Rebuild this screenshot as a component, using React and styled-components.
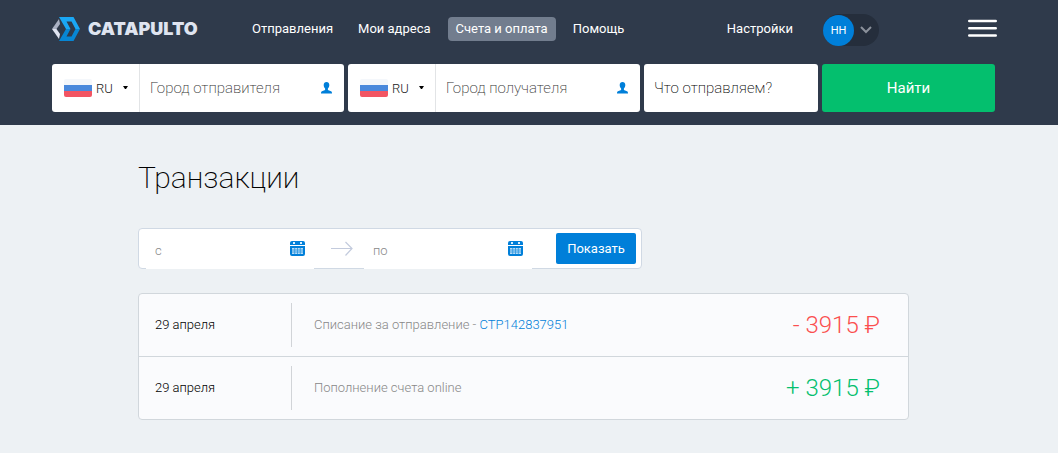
import React from "react";
import styled, { createGlobalStyle } from "styled-components";

const GlobalStyle = createGlobalStyle`
  *, *::before, *::after { box-sizing: border-box; }
  body {
    margin: 0;
    background: #edf1f4;
    color: #111;
    font-family: Roboto, "Liberation Sans", sans-serif;
    font-size: 13px;
    line-height: 20px;
  }
  button, input, select { font-family: inherit; }
`;

const Header = styled.header`
  padding: 14px 63px 13px 52px;
  background: #2f3a4b;
`;

const TopBar = styled.div`
  display: flex;
  align-items: center;
  height: 32px;
  margin-bottom: 18px;
`;

const Logo = styled.a`
  display: flex;
  align-items: center;
  gap: 8px;
  width: 192px;
  padding-bottom: 2px;
  color: #dfe4f0;
  font-family: Inter, Roboto, sans-serif;
  font-size: 18px;
  font-weight: 900;
  text-decoration: none;
`;

const Nav = styled.nav`
  display: flex;
  flex: 1;
  gap: 9px;
  margin-bottom: 2px;
`;

const NavLink = styled.a`
  padding: 2px 8px;
  border-radius: 4px;
  background: ${(p) => (p.$active ? "#727d8e" : "transparent")};
  color: #fff;
  font-weight: 400;
  text-decoration: none;
  white-space: nowrap;
`;

const SettingsLink = styled(NavLink)`
  margin: 0 22px 2px 0;
`;

const UserButton = styled.button`
  display: flex;
  align-items: center;
  gap: 6px;
  width: 56px;
  height: 32px;
  margin-right: 87px;
  padding: 0;
  border: 0;
  border-radius: 16px;
  background: #252e3c;
`;

const Avatar = styled.span`
  width: 31px;
  border-radius: 50%;
  background: #007fd9;
  color: #fff;
  font-size: 11px;
  line-height: 31px;
  text-align: center;
`;

const MenuButton = styled.button`
  display: flex;
  margin: 0 -2px 4px 0;
  padding: 0;
  border: 0;
  background: none;
`;

const SearchForm = styled.form`
  display: grid;
  grid-template-columns: 292fr 292fr 174fr 173fr;
  gap: 4px;
  height: 48px;
`;

const CityBox = styled.div`
  display: flex;
  align-items: center;
  min-width: 0;
  padding-right: 12px;
  border-radius: 3px;
  background: #fff;
`;

const Country = styled.label`
  display: flex;
  flex: none;
  align-items: center;
  gap: 4px;
  width: 88px;
  height: 100%;
  padding: 0 11px 0 12px;
  border-right: 1px solid #e2e4e6;
`;

const CountrySelect = styled.select`
  flex: 1;
  min-width: 0;
  padding: 0;
  border: 0;
  appearance: none;
  background: none;
  color: #222;
  font-size: 13px;
  font-weight: 300;
`;

const SearchInput = styled.input`
  flex: 1;
  min-width: 0;
  padding: 0 10px;
  border: 0;
  border-radius: 3px;
  background: #fff;
  font-size: 15px;
  font-weight: 200;
  &::placeholder { color: ${(p) => (p.$dark ? "#000" : "#333")}; opacity: 1; }
`;

const SearchButton = styled.button`
  border: 0;
  border-radius: 3px;
  background: #04bf6e;
  color: #fff;
  font-size: 15px;
`;

const Main = styled.main`
  padding: 35px 149px 33px 138px;
`;

const Title = styled.h1`
  margin: 0 0 32px;
  color: #000;
  font-size: 30px;
  font-weight: 200;
  line-height: 36px;
`;

const FilterForm = styled.form`
  display: flex;
  align-items: center;
  width: fit-content;
  height: 41px;
  margin-bottom: 24px;
  padding: 0 5px 0 7px;
  border: 1px solid #d0d9e4;
  border-radius: 4px;
  background: #fff;
`;

const DateField = styled.label`
  display: flex;
  align-items: center;
  width: 168px;
  height: 40px;
  margin-bottom: -1px;
  padding: 0 9px;
  background: #fff;
`;

const DateInput = styled.input`
  flex: 1;
  min-width: 0;
  padding: 2px 0 0;
  border: 0;
  background: none;
  font-size: 13px;
  font-weight: 300;
  &::placeholder { color: #888; opacity: 1; }
`;

const ArrowGap = styled.span`
  display: flex;
  justify-content: center;
  width: 50px;
  padding-left: 6px;
`;

const ShowButton = styled.button`
  width: 80px;
  height: 31px;
  margin-left: 24px;
  padding: 0;
  border: 0;
  border-radius: 2px;
  background: #007fd9;
  color: #fff;
  font-size: 13px;
`;

const Card = styled.div`
  border: 1px solid #d1d7dc;
  border-radius: 4px;
  background: #fafbfd;
`;

const Table = styled.table`
  width: 100%;
  border-collapse: collapse;
`;

const Row = styled.tr`
  & + & { border-top: 1px solid #d1d7dc; }
`;

const DateCell = styled.td`
  width: 152px;
  padding: 0 0 0 16px;
  color: #000;
  font-weight: 300;
`;

const TextCell = styled.td`
  padding: 9px 0;
`;

const Description = styled.div`
  padding-left: 22px;
  border-left: 1px solid #d1d4d8;
  color: #888;
  font-weight: 300;
  line-height: 44px;
`;

const OrderLink = styled.a`
  color: #007fd9;
  text-decoration: none;
`;

const AmountCell = styled.td`
  padding: 0 28px 0 0;
  color: ${(p) => (p.$income ? "#04bf6e" : "#fb4f4f")};
  font-size: 24px;
  font-weight: 300;
  text-align: right;
  white-space: nowrap;
`;

const LogoMark = () => (
  <svg width="28" height="24" viewBox="0 0 28 24" aria-hidden="true">
    <path d="M7 2 0 12h4.500L8 7z" fill="#aab1c3" />
    <path d="M0 12h4.500L8 17l-1 5z" fill="#e0e4f1" />
    <path d="M7 0h14.500L28 12h-4.500l-4-7.500H14.500L18.500 12H14z" fill="#1aa7f5" />
    <path d="M14 12h4.500l-4 7.500h5l4-7.500H28l-6.500 12H7z" fill="#0786d4" />
  </svg>
);

const Flag = () => (
  <svg width="28" height="18" viewBox="0 0 28 18" aria-hidden="true">
    <path d="M2 0h24a2 2 0 0 1 2 2v4H0V2a2 2 0 0 1 2-2z" fill="#f4f7fb" />
    <path d="M0 6h28v6H0z" fill="#4a89dc" />
    <path d="M0 12h28v4a2 2 0 0 1-2 2H2a2 2 0 0 1-2-2z" fill="#f25563" />
  </svg>
);

const Caret = () => (
  <svg width="5" height="4" viewBox="0 0 5 4" aria-hidden="true">
    <path d="M0 0h5L3 3H2z" fill="#000" />
  </svg>
);

const PersonIcon = () => (
  <svg width="11" height="12" viewBox="0 0 11 12" aria-hidden="true">
    <path
      d="M5.500 0C3.800 0 2.700 1.200 2.700 3c0 1.500.5 2.700 1.400 3.400V8L1 9.200C.3 9.500 0 10 0 11.500h11C11 10 10.700 9.500 10 9.200L6.900 8V6.400C7.800 5.700 8.300 4.500 8.300 3c0-1.800-1.100-3-2.800-3z"
      fill="#007fd9"
    />
  </svg>
);

const CalendarIcon = () => (
  <svg width="15" height="16" viewBox="0 0 15 16" aria-hidden="true">
    <path d="M2 0h11a2 2 0 0 1 2 2v2H0V2a2 2 0 0 1 2-2zM0 5h15v8a2 2 0 0 1-2 2H2a2 2 0 0 1-2-2z" fill="#007fd9" />
    <path d="M3 1h2v2H3zM10 1h2v2h-2z" fill="#d8efff" />
    <path d="M2 7h11v6H2z" fill="#b5dbf7" />
    <path d="M2 9h11M2 11h11M4.700 7v6M7.500 7v6M10.300 7v6" stroke="#2a95df" strokeWidth=".8" />
  </svg>
);

const ArrowIcon = () => (
  <svg width="22" height="16" viewBox="0 0 22 16" fill="none" stroke="#c3cbdd" strokeWidth="1.200" aria-hidden="true">
    <path d="M0 7.500h21M14.500 1l6.500 6.500-6.500 7" />
  </svg>
);

const ChevronIcon = () => (
  <svg width="12" height="8" viewBox="0 0 12 8" fill="none" stroke="#8b919b" strokeWidth="2" aria-hidden="true">
    <path d="m1 1 5 5 5-5" />
  </svg>
);

const MenuIcon = () => (
  <svg width="31" height="18" viewBox="0 0 31 18" stroke="#fff" strokeWidth="2.600" strokeLinecap="round" aria-hidden="true">
    <path d="M3.300 2h26.400M3.300 9.300h26.400M3.300 16.500h26.400" />
  </svg>
);

const navItems = ["Отправления", "Мои адреса", "Счета и оплата", "Помощь"];

const transactions = [
  { date: "29 апреля", text: "Списание за отправление - ", order: "CTP142837951", amount: "- 3915 ₽" },
  { date: "29 апреля", text: "Пополнение счета online", amount: "+ 3915 ₽", income: true },
];

const CityField = ({ placeholder }) => (
  <CityBox>
    <Country>
      <Flag />
      <CountrySelect aria-label="Страна" defaultValue="RU">
        <option>RU</option>
      </CountrySelect>
      <Caret />
    </Country>
    <SearchInput type="text" placeholder={placeholder} aria-label={placeholder} />
    <PersonIcon />
  </CityBox>
);

export default function App() {
  return (
    <>
      <GlobalStyle />
      <Header>
        <TopBar>
          <Logo href="#">
            <LogoMark />
            CATAPULTO
          </Logo>
          <Nav>
            {navItems.map((item) => (
              <NavLink key={item} href="#" $active={item === "Счета и оплата"}>
                {item}
              </NavLink>
            ))}
          </Nav>
          <SettingsLink href="#">Настройки</SettingsLink>
          <UserButton type="button">
            <Avatar>НН</Avatar>
            <ChevronIcon />
          </UserButton>
          <MenuButton type="button" aria-label="Меню">
            <MenuIcon />
          </MenuButton>
        </TopBar>
        <SearchForm>
          <CityField placeholder="Город отправителя" />
          <CityField placeholder="Город получателя" />
          <SearchInput $dark type="text" placeholder="Что отправляем?" aria-label="Что отправляем?" />
          <SearchButton type="button">Найти</SearchButton>
        </SearchForm>
      </Header>
      <Main>
        <Title>Транзакции</Title>
        <FilterForm>
          <DateField>
            <DateInput type="text" placeholder="с" aria-label="с" />
            <CalendarIcon />
          </DateField>
          <ArrowGap>
            <ArrowIcon />
          </ArrowGap>
          <DateField>
            <DateInput type="text" placeholder="по" aria-label="по" />
            <CalendarIcon />
          </DateField>
          <ShowButton type="button">Показать</ShowButton>
        </FilterForm>
        <Card>
          <Table>
            <tbody>
              {transactions.map((t) => (
                <Row key={t.amount}>
                  <DateCell>{t.date}</DateCell>
                  <TextCell>
                    <Description>
                      {t.text}
                      {t.order && <OrderLink href="#">{t.order}</OrderLink>}
                    </Description>
                  </TextCell>
                  <AmountCell $income={t.income}>{t.amount}</AmountCell>
                </Row>
              ))}
            </tbody>
          </Table>
        </Card>
      </Main>
    </>
  );
}
